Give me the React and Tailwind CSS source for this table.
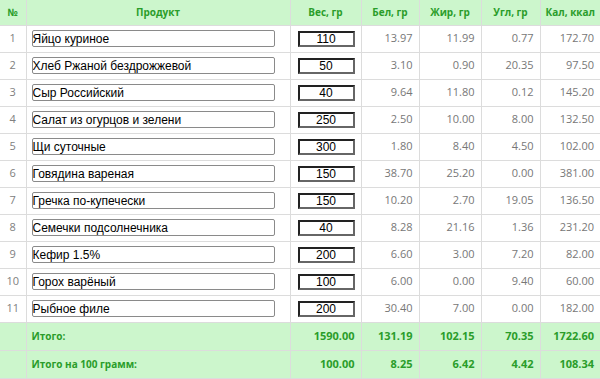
import React from "react";

const rows = [
  ["Яйцо куриное", "110", "13.97", "11.99", "0.77", "172.70"],
  ["Хлеб Ржаной бездрожжевой", "50", "3.10", "0.90", "20.35", "97.50"],
  ["Сыр Российский", "40", "9.64", "11.80", "0.12", "145.20"],
  ["Салат из огурцов и зелени", "250", "2.50", "10.00", "8.00", "132.50"],
  ["Щи суточные", "300", "1.80", "8.40", "4.50", "102.00"],
  ["Говядина вареная", "150", "38.70", "25.20", "0.00", "381.00"],
  ["Гречка по-купечески", "150", "10.20", "2.70", "19.05", "136.50"],
  ["Семечки подсолнечника", "40", "8.28", "21.16", "1.36", "231.20"],
  ["Кефир 1.5%", "200", "6.60", "3.00", "7.20", "82.00"],
  ["Горох варёный", "100", "6.00", "0.00", "9.40", "60.00"],
  ["Рыбное филе", "200", "30.40", "7.00", "0.00", "182.00"],
];

const totals = [
  ["Итого:", "1590.00", "131.19", "102.15", "70.35", "1722.60"],
  ["Итого на 100 грамм:", "100.00", "8.25", "6.42", "4.42", "108.34"],
];

const headers = ["Вес, гр", "Бел, гр", "Жир, гр", "Угл, гр", "Кал, ккал"];

export default function App() {
  return (
    <div className="w-[600px] h-[379px] bg-white overflow-hidden font-['Open_Sans',sans-serif]">
      <table className="w-[600px] table-fixed border-collapse">
        <colgroup>
          <col className="w-[26px]" />
          <col className="w-[264px]" />
          <col className="w-[71px]" />
          <col className="w-[58px]" />
          <col className="w-[62px]" />
          <col className="w-[59px]" />
          <col className="w-[60px]" />
        </colgroup>
        <thead>
          <tr className="h-[25px] bg-[#ccf6cc]">
            <th className="border border-[#dcdcdc] border-t-0 border-l-0 text-[10px] font-bold text-[#2a9d2a] text-center p-0">№</th>
            <th className="border border-[#dcdcdc] border-t-0 text-[10px] font-bold text-[#2a9d2a] text-center p-0">Продукт</th>
            {headers.map((h, i) => (
              <th
                key={h}
                className={`border border-[#dcdcdc] border-t-0 text-[10px] font-bold text-[#2a9d2a] text-center p-0 ${i === 4 ? "border-r-0" : ""}`}
              >
                {h}
              </th>
            ))}
          </tr>
        </thead>
        <tbody>
          {rows.map((r, idx) => (
            <tr key={idx} className="h-[27px]">
              <td className="border border-[#dcdcdc] border-l-0 text-center text-[11px] text-[#808080] p-0">{idx + 1}</td>
              <td className="border border-[#dcdcdc] px-[5px] py-0">
                <input
                  readOnly
                  value={r[0]}
                  className="block w-[243px] h-[17px] border border-[#8a8a8a] rounded-[2px] bg-white px-0 py-0 text-[12px] text-black font-['Liberation_Sans',sans-serif] outline-none"
                />
              </td>
              <td className="border border-[#dcdcdc] py-0 pl-[7px] pr-0">
                <input
                  readOnly
                  value={r[1]}
                  className="block w-[57px] h-[16px] border-2 border-t-[#222] border-l-[#222] border-r-[#666] border-b-[#666] bg-white text-center text-[12px] text-black font-['Liberation_Sans',sans-serif] outline-none p-0"
                />
              </td>
              {r.slice(2).map((v, i) => (
                <td
                  key={i}
                  className={`border border-[#dcdcdc] text-right text-[11px] text-[#777] py-0 pr-[6px] pl-0 ${i === 3 ? "border-r-0" : ""}`}
                >
                  {v}
                </td>
              ))}
            </tr>
          ))}
          {totals.map((t, idx) => (
            <tr key={idx} className="h-[28px] bg-[#ccf6cc]">
              <td className="border border-[#dcdcdc] border-l-0 p-0"></td>
              <td className="border border-[#dcdcdc] px-[5px] py-0 text-[10px] font-bold text-[#2a9d2a]">{t[0]}</td>
              {t.slice(1).map((v, i) => (
                <td
                  key={i}
                  className={`border border-[#dcdcdc] text-right text-[11px] font-bold text-[#2a9d2a] py-0 pr-[6px] pl-0 ${i === 4 ? "border-r-0" : ""}`}
                >
                  {v}
                </td>
              ))}
            </tr>
          ))}
        </tbody>
      </table>
    </div>
  );
}
